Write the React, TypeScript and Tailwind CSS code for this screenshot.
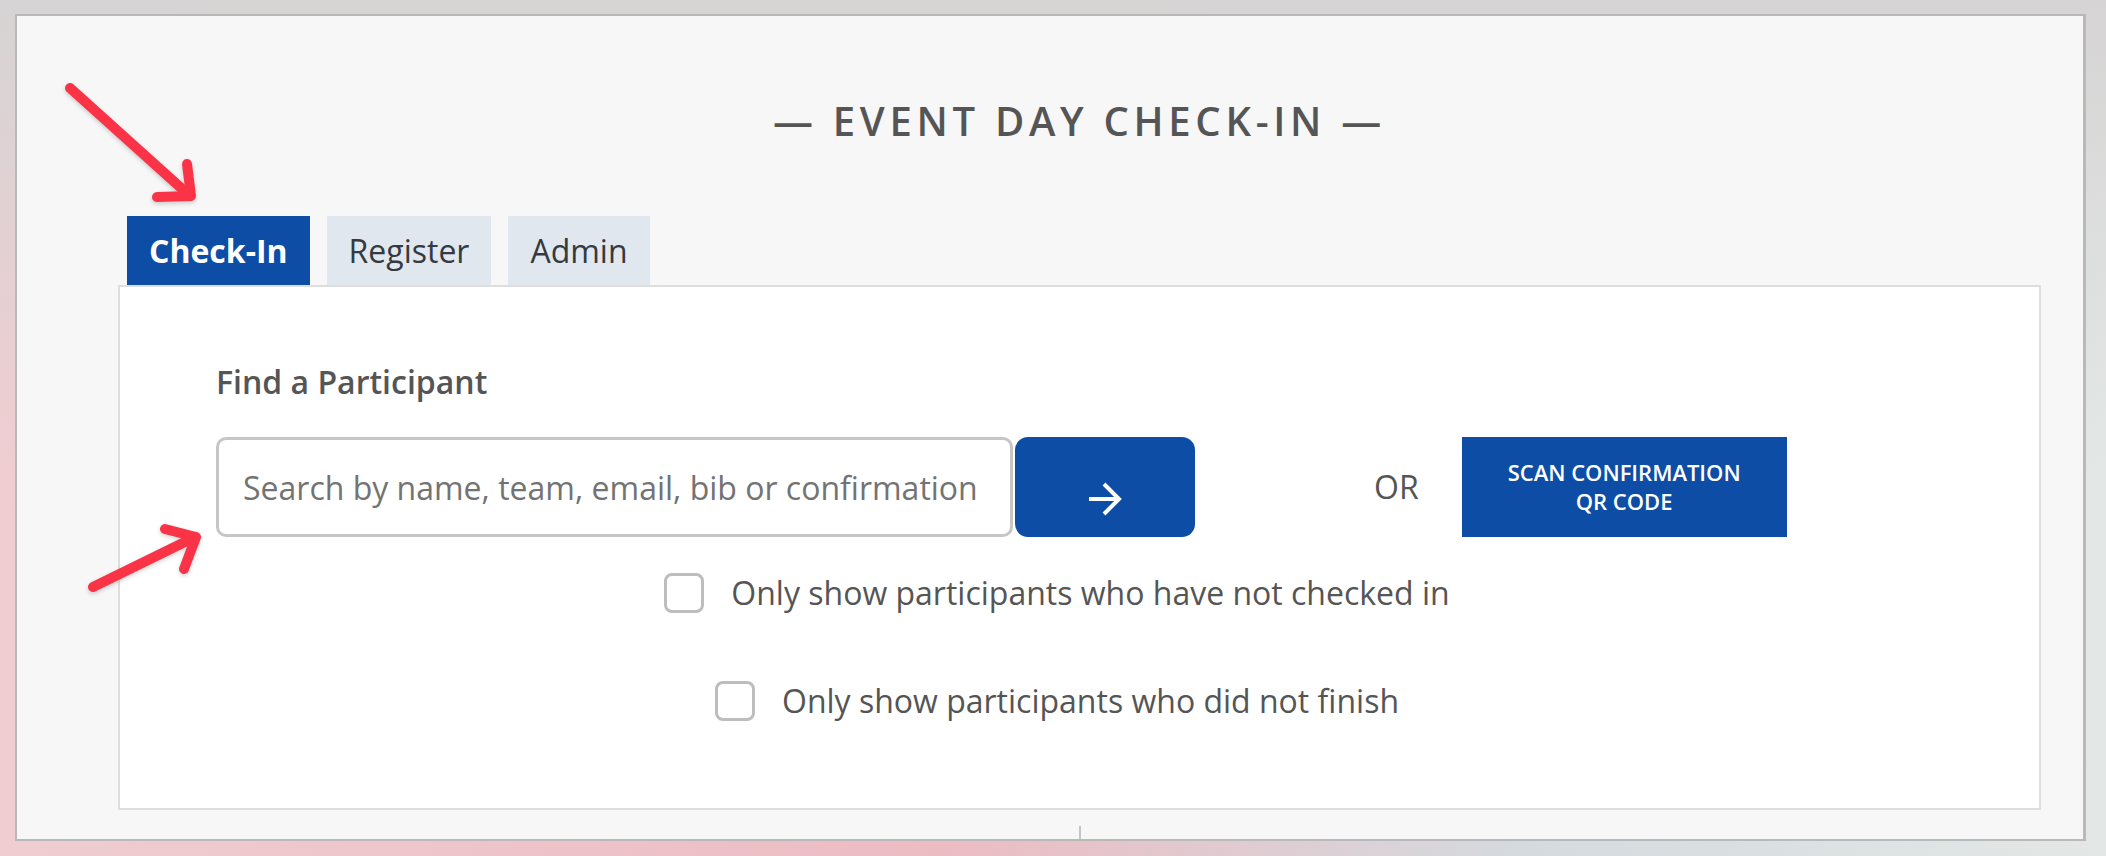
import { useState } from "react";

function RedArrows() {
  return (
    <svg
      className="absolute left-0 top-0 pointer-events-none"
      width={2106}
      height={856}
      viewBox="0 0 2106 856"
      fill="none"
    >
      <g
        stroke="#fa3446"
        strokeWidth={10}
        strokeLinecap="round"
        strokeLinejoin="round"
        style={{ filter: "drop-shadow(0 2px 2px rgba(0,0,0,0.18))" }}
      >
        <path d="M70 88 L190 196" />
        <path d="M187 164 L191 196 L157 197" />
        <path d="M93 587 L195 537" />
        <path d="M165 529 L196 537 L184 569" />
      </g>
    </svg>
  );
}

function Checkbox({ label }: { label: string }) {
  const [checked, setChecked] = useState(false);
  return (
    <label className="flex items-center cursor-pointer">
      <span
        onClick={() => setChecked(!checked)}
        className="w-[40px] h-[40px] rounded-[8px] border-[3px] border-[#bdbdbd] bg-white flex-shrink-0"
      />
      <span className="ml-[27px] text-[32px] leading-[40px] text-[#555555]">{label}</span>
    </label>
  );
}

export default function App() {
  const [tab, setTab] = useState("Check-In");
  const [query, setQuery] = useState("");
  const tabs = ["Check-In", "Register", "Admin"];

  return (
    <div className="relative w-[2106px] h-[856px] overflow-hidden font-['Open_Sans',sans-serif] bg-[linear-gradient(to_bottom,rgba(214,212,212,1)_0%,rgba(214,212,212,0)_55%),linear-gradient(to_right,#efcdd1,#ecbcc3_45%,#d4dade_72%,#e3e8e6)] pl-[15px] pt-[14px]">
      <div className="w-[2071px] h-[827px] overflow-hidden bg-[#f7f7f7] border-t-2 border-l-2 border-b-2 border-r-[3px] border-[#b9b9b9] pl-[101px] pr-[42px] pt-[79px]">
        {/* Title */}
        <h1 className="text-center text-[40px] leading-[52px] font-semibold tracking-[4.7px] text-[#555555]">
          — EVENT DAY CHECK-IN —
        </h1>

        {/* Tabs */}
        <div className="flex gap-[17px] ml-[9px] mt-[69px]">
          {tabs.map((t) => (
            <button
              key={t}
              onClick={() => setTab(t)}
              className={
                tab === t
                  ? "h-[69px] px-[22px] text-[32px] leading-[40px] font-bold text-white bg-[#0e4da6]"
                  : "h-[69px] px-[22px] text-[32px] leading-[40px] text-[#343a40] bg-[#e0e7ee]"
              }
            >
              {t}
            </button>
          ))}
        </div>

        {/* Panel */}
        <div className="h-[525px] bg-white border-2 border-[#dedede] pl-[96px] pr-[141px] pt-[75px]">
          <h2 className="text-[32px] leading-[40px] font-semibold text-[#555555]">Find a Participant</h2>

          <div className="flex items-center mt-[35px]">
            <input
              value={query}
              onChange={(e) => setQuery(e.target.value)}
              placeholder="Search by name, team, email, bib or confirmation"
              className="w-[797px] h-[100px] border-[3px] border-[#c6c6c6] rounded-[10px] pl-[24px] text-[32px] text-[#333] placeholder:text-[#737373] outline-none"
            />
            <button className="ml-[2px] w-[180px] h-[100px] rounded-[13px] bg-[#0e4da6] flex items-center justify-center pt-[24px]">
              <svg width="34" height="34" viewBox="0 0 34 34" fill="none" stroke="white" strokeWidth={4}>
                <path d="M1 17 H31" />
                <path d="M16 2 L31 17 L16 32" />
              </svg>
            </button>
            <span className="ml-[179px] text-[32px] leading-[40px] text-[#555555]">OR</span>
            <button className="ml-[43px] w-[325px] h-[100px] bg-[#0e4da6] text-white text-[22px] leading-[29px] font-semibold">
              SCAN CONFIRMATION
              <br />
              QR CODE
            </button>
          </div>

          <div className="flex flex-col items-center">
            <div className="mt-[36px]">
              <Checkbox label="Only show participants who have not checked in" />
            </div>
            <div className="mt-[68px]">
              <Checkbox label="Only show participants who did not finish" />
            </div>
          </div>
        </div>

        {/* Content below, cut off */}
        <div className="flex justify-center mt-[16px]">
          <div className="w-[2px] h-[40px] bg-[#c4c4c4]" />
        </div>
      </div>

      <RedArrows />
    </div>
  );
}
